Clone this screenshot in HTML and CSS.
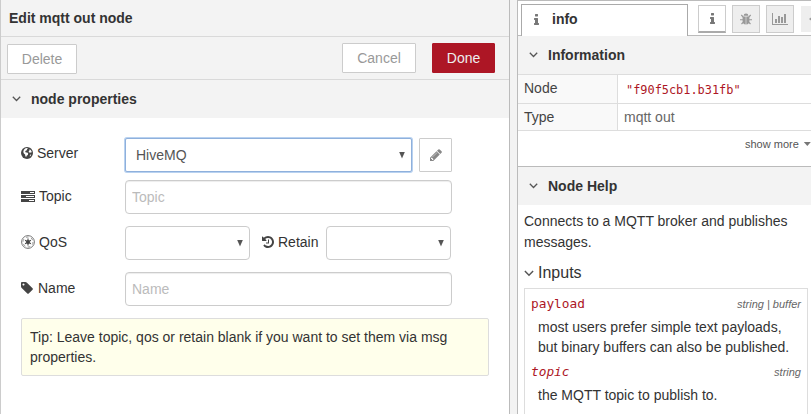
FILE: index.html
```html
<!DOCTYPE html>
<html lang="en">
<head>
<meta charset="utf-8">
<title>Edit mqtt out node</title>
<link rel="stylesheet" href="styles.css">
</head>
<body>
<div class="workspace">
  <main class="editor">
    <header class="editor-title">Edit mqtt out node</header>
    <div class="toolbar">
      <button class="btn delete">Delete</button>
      <button class="btn cancel">Cancel</button>
      <button class="btn primary">Done</button>
    </div>
    <h2 class="section"><svg class="chevron" viewBox="0 0 9 6"><path d="M.8.8 4.5 4.5 8.2.8"/></svg>node properties</h2>
    <form class="form">
      <div class="row server">
        <label class="label"><svg class="icon globe" viewBox="0 0 12 12"><circle cx="6" cy="6" r="6"/><path class="cut" d="M4.6 1.300 6.200 1l.6.700-1 .6.400.7-1.500.7-.6 1.200 1 .5 1.200.2.9 1-.4 1.300-1.200.9-.5 1.500-.8-1.200-.2-1.500-1.200-1.200L2.300 5l.3-1.600q.8-1.500 2-2.100zM8.200 2.500l1.300.300 1.200 1.800-.5 1.200-1-.4-1.200.2-.4-1.200.8-.7zM9 7.800l1.200-.3-.7 1.600-.8.400z"/></svg>Server</label>
        <div class="select wide focused">HiveMQ<i class="arrow"></i></div>
        <button type="button" class="edit"><svg viewBox="0 128 1536 1536"><path d="M363 1536l91-91-235-235-91 91v107h128v128h107zm523-928q0-22-22-22-10 0-17 7l-542 542q-7 7-7 17 0 22 22 22 10 0 17-7l542-542q7-7 7-17zm-54-192l416 416-832 832h-416v-416zm683 96q0 53-37 90l-166 166-416-416 166-165q36-38 90-38 53 0 91 38l235 234q37 39 37 91z"/></svg></button>
      </div>
      <div class="row topic">
        <label class="label"><svg class="icon tasks" viewBox="0 0 14 11"><path d="M0 0h14v3H0zM0 4h14v3H0zM0 8h14v3H0z"/><path class="cut" d="M9 1h4v1H9zM5 5h8v1H5zM8 9h5v1H8z"/></svg>Topic</label>
        <input class="input" placeholder="Topic">
      </div>
      <div class="row qos">
        <label class="label"><svg class="icon empire" viewBox="0 0 14 14"><circle class="ring" cx="7" cy="7" r="6.400"/><circle class="teeth" cx="7" cy="7" r="5"/><circle cx="7" cy="7" r="1.900"/><path class="spokes" d="M7 3.600v6.800M4.100 5.300l5.800 3.400M9.900 5.300 4.100 8.700"/></svg>QoS</label>
        <div class="select small"><i class="arrow"></i></div>
        <label class="retain"><svg class="icon history" viewBox="0 128 1536 1536"><path d="M1536 896q0 156-61 298t-164 245-245 164-298 61q-172 0-327-72.500t-264-204.500q-7-10-6.500-22.500t8.500-20.500l137-138q10-9 25-9 16 2 23 12 73 95 179 147t225 52q104 0 198.500-40.500t163.500-109.500 109.500-163.500 40.500-198.500-40.500-198.500-109.500-163.500-163.500-109.500-198.500-40.500q-98 0-188 35.500t-160 101.500l137 138q31 30 14 69-17 40-59 40h-448q-26 0-45-19t-19-45v-448q0-42 40-59 39-17 69 14l130 129q107-101 244.500-156.500t284.500-55.500q156 0 298 61t245 164 164 245 61 298zm-640-288v448q0 14-9 23t-23 9h-320q-14 0-23-9t-9-23v-64q0-14 9-23t23-9h224v-352q0-14 9-23t23-9h64q14 0 23 9t9 23z"/></svg>Retain</label>
        <div class="select small"><i class="arrow"></i></div>
      </div>
      <div class="row">
        <label class="label"><svg class="icon tag" viewBox="0 128 1536 1536"><path d="M448 448q0-53-37.500-90.500t-90.500-37.500-90.500 37.500-37.500 90.500 37.500 90.500 90.500 37.500 90.500-37.500 37.500-90.500zm1067 576q0 53-37 90l-491 492q-39 37-91 37-53 0-90-37l-715-716q-38-37-64.500-101t-26.500-117v-416q0-52 38-90t90-38h416q53 0 117 26.500t102 64.500l715 714q37 39 37 91z"/></svg>Name</label>
        <input class="input" placeholder="Name">
      </div>
      <div class="tip">Tip: Leave topic, qos or retain blank if you want to set them via msg properties.</div>
    </form>
  </main>
  <aside class="sidebar">
    <nav class="tabs">
      <div class="tab"><svg class="info" viewBox="0 128 640 1408"><path d="M640 1344v128q0 26-19 45t-45 19h-512q-26 0-45-19t-19-45v-128q0-26 19-45t45-19h64v-384h-64q-26 0-45-19t-19-45v-128q0-26 19-45t45-19h384q26 0 45 19t19 45v576h64q26 0 45 19t19 45zM512 192v192q0 26-19 45t-45 19h-256q-26 0-45-19t-19-45v-192q0-26 19-45t45-19h256q26 0 45 19t19 45z"/></svg>info</div>
      <div class="tool active"><svg class="info" viewBox="0 128 640 1408"><path d="M640 1344v128q0 26-19 45t-45 19h-512q-26 0-45-19t-19-45v-128q0-26 19-45t45-19h64v-384h-64q-26 0-45-19t-19-45v-128q0-26 19-45t45-19h384q26 0 45 19t19 45v576h64q26 0 45 19t19 45zM512 192v192q0 26-19 45t-45 19h-256q-26 0-45-19t-19-45v-192q0-26 19-45t45-19h256q26 0 45 19t19 45z"/></svg></div>
      <div class="tool"><svg class="bug" viewBox="0 0 12 12"><path d="M3.600 2.800a2.400 2.400 0 0 1 4.800 0zM2.600 3.400h3.100V11.500Q2.600 11.200 2.600 8zM6.300 3.400h3.100V8q0 3.200-3.100 3.500z"/><path class="legs" d="M1.300 2 3.200 4M10.700 2 8.800 4M0 6.700h3M9 6.700h3M1.500 11l2-2M10.500 11l-2-2"/></svg></div>
      <div class="tool"><svg class="chart" viewBox="0 0 16 12"><path d="M0 0h1v11h15v1H0zM3 6h2v4H3zM6 3h2v7H6zM9 4h2v6H9zM12 1h2v9h-2z"/></svg></div>
      <div class="tool more"><i class="arrow left"></i></div>
    </nav>
    <h2 class="section"><svg class="chevron" viewBox="0 0 9 6"><path d="M.8.8 4.500 4.500 8.200.8"/></svg>Information</h2>
    <dl class="facts">
      <dt>Node</dt><dd class="code">"f90f5cb1.b31fb"</dd>
      <dt>Type</dt><dd>mqtt out</dd>
    </dl>
    <div class="show-more">show more<i class="caret"></i></div>
    <h2 class="section help"><svg class="chevron" viewBox="0 0 9 6"><path d="M.8.8 4.500 4.500 8.200.8"/></svg>Node Help</h2>
    <div class="doc">
      <p class="intro">Connects to a MQTT broker and publishes messages.</p>
      <h3 class="inputs"><svg class="chevron" viewBox="0 0 9 6"><path d="M.8.8 4.500 4.500 8.200.8"/></svg>Inputs</h3>
      <div class="properties">
        <div class="prop"><span class="name">payload</span><span class="type">string | buffer</span></div>
        <p>most users prefer simple text payloads, but binary buffers can also be published.</p>
        <div class="prop"><span class="name optional">topic</span><span class="type">string</span></div>
        <p>the MQTT topic to publish to.</p>
      </div>
    </div>
  </aside>
</div>
</body>
</html>
```
FILE: styles.css
```css
* { box-sizing: border-box; }
body {
  margin: 0;
  overflow: hidden;
  background: #f3f3f3;
  color: #333;
  font: 14px/20px "Liberation Sans", Arial, sans-serif;
}
h2, h3, p, dl, dd { margin: 0; }
svg { display: block; flex: none; fill: currentColor; }
button, input { font: inherit; margin: 0; }
.workspace { display: flex; gap: 7px; width: 811px; height: 414px; }
.editor {
  width: 510px;
  background: #fff;
  border-left: 1px solid #ccc;
  border-right: 1px solid #bbb;
}
.editor-title {
  height: 37px;
  padding: 8px 8px 0;
  background: #f3f3f3;
  border-bottom: 1px solid #d9d9d9;
  font-weight: bold;
}
.toolbar {
  display: flex;
  height: 43px;
  padding: 6px 14px 0 6px;
  background: #f3f3f3;
  border-bottom: 1px solid #d9d9d9;
}
.btn {
  height: 30px;
  padding: 0;
  background: #fff;
  border: 1px solid #ccc;
  border-radius: 1px;
  color: #999;
}
.delete { width: 70px; margin-top: 1px; }
.cancel { width: 74px; margin-left: auto; }
.primary { width: 63px; margin-left: 16px; background: #ad1625; border-color: #ad1625; color: #eee; }
.section {
  display: flex;
  align-items: center;
  height: 38px;
  padding-left: 11px;
  background: #f3f3f3;
  font-size: 14px;
  font-weight: bold;
}
.chevron { width: 9px; height: 6px; fill: none; stroke: #555; stroke-width: 1.3; }
.section .chevron { margin-right: 10px; }
.form { padding: 20px 0 0 20px; }
.row { display: flex; align-items: center; height: 34px; margin-bottom: 12px; }
.row.server { margin-bottom: 8px; }
.label { display: flex; align-items: center; width: 104px; padding-bottom: 2px; }
.server .label { padding-bottom: 4px; }
.icon { margin-right: 4px; color: #444; }
.globe, .history, .tag { width: 12px; height: 12px; }
.icon.tag { margin-right: 5px; }
.tasks { width: 14px; height: 11px; }
.empire { width: 14px; height: 14px; }
.cut { fill: #fff; }
.ring { fill: none; stroke: #666; stroke-width: .9; }
.teeth { fill: none; stroke: #999; stroke-width: 1; stroke-dasharray: 2.8 2.4; }
.spokes { stroke: #444; stroke-width: 1.1; }
.select, .input {
  height: 34px;
  background: #fff;
  border: 1px solid #ccc;
  border-radius: 4px;
}
.input {
  width: 327px;
  padding: 0 6px 1px;
  box-shadow: inset 0 1px 1px rgba(0, 0, 0, .075);
}
.input::placeholder { color: #bbb; opacity: 1; }
.select { display: flex; align-items: center; padding: 0 6px 0 10px; color: #555; }
.wide { width: 287px; }
.small { width: 125px; }
.focused { border-color: #8fb0dc; border-radius: 2px; box-shadow: 0 0 0 1px #b9d2f0; }
.arrow {
  width: 6px;
  height: 7px;
  margin-left: auto;
  background: #555;
  clip-path: polygon(0 0, 100% 0, 50% 100%);
}
.edit {
  display: flex;
  align-items: center;
  justify-content: center;
  width: 33px;
  height: 34px;
  margin-left: 7px;
  padding: 0;
  background: #fff;
  border: 1px solid #ccc;
  border-radius: 1px;
  color: #888;
}
.edit svg { width: 12px; height: 12px; }
.retain { display: flex; align-items: center; width: 76px; padding: 0 0 2px 12px; }
.tip {
  width: 468px;
  height: 58px;
  padding: 8px;
  background: #ffffeb;
  border: 1px solid #ddd;
  border-radius: 2px;
}
.sidebar {
  width: 294px;
  overflow: hidden;
  background: #fff;
  border-top: 1px solid #bbb;
  border-left: 1px solid #bbb;
}
.tabs {
  display: flex;
  height: 35px;
  padding: 3px 0 0 3px;
  box-shadow: inset 0 -1px #bbb;
}
.tab {
  display: flex;
  flex: none;
  align-items: center;
  width: 167px;
  height: 32px;
  padding: 0 0 3px 12px;
  margin-right: 10px;
  background: #fff;
  border: 1px solid #aaa;
  border-bottom: 0;
  font-weight: bold;
}
.info { width: 5px; height: 11px; color: #777; }
.tab .info { margin-right: 13px; }
.tool {
  display: flex;
  align-items: center;
  justify-content: center;
  flex: none;
  width: 28px;
  height: 28px;
  margin: 1px 6px 0 0;
  background: #eee;
  border: 1px solid #ccc;
  color: #999;
}
.tool.active { background: #fff; border-bottom: 2px solid #aaa; }
.bug { width: 12px; height: 12px; }
.legs { fill: none; stroke: currentColor; stroke-width: 1.1; }
.chart { width: 16px; height: 12px; }
.tool.more { justify-content: flex-start; margin: 2px 0 0 1px; height: 26px; border: 0; padding-left: 8px; }
.arrow.left { width: 5px; margin: 0; background: #999; clip-path: polygon(0 50%, 100% 0, 100% 100%); }
.facts {
  display: grid;
  grid-template-columns: 100px 1fr;
  grid-template-rows: 29px 27px;
  border-bottom: 1px solid #ddd;
  color: #666;
}
.facts dt, .facts dd { padding: 3px 6px 0; border-top: 1px solid #ddd; }
.facts dt { background: #f9f9f9; border-right: 1px solid #ddd; color: #444; }
.facts dd.code { padding: 5px 8px 0; font: 11.9px/20px "DejaVu Sans Mono", monospace; color: #ad1625; }
.show-more {
  display: flex;
  align-items: center;
  height: 35px;
  padding: 0 0 9px 227px;
  font-size: 11px;
  color: #555;
  white-space: nowrap;
}
.caret { width: 7px; height: 4px; margin-left: 5px; flex: none; background: #777; clip-path: polygon(0 0, 100% 0, 50% 100%); }
.help { height: 39px; border-top: 1px solid #bbb; }
.doc { padding: 6px 2px 0 6px; }
.intro { line-height: 21px; }
.inputs {
  display: flex;
  align-items: center;
  height: 20px;
  margin: 10px 0 5px;
  font-size: 16px;
  font-weight: normal;
}
.inputs .chevron { width: 10px; height: 7px; margin-right: 4px; }
.properties { width: 284px; height: 140px; padding: 5px 6px; border: 1px solid #ddd; }
.prop { display: flex; justify-content: space-between; height: 23px; line-height: 20px; }
.name { font-family: "DejaVu Sans Mono", monospace; font-size: 12.8px; color: #ad1625; }
.optional { font-style: italic; }
.type { font-size: 11px; font-style: italic; color: #666; }
.properties p { padding-left: 7px; margin-bottom: 5px; }
```
